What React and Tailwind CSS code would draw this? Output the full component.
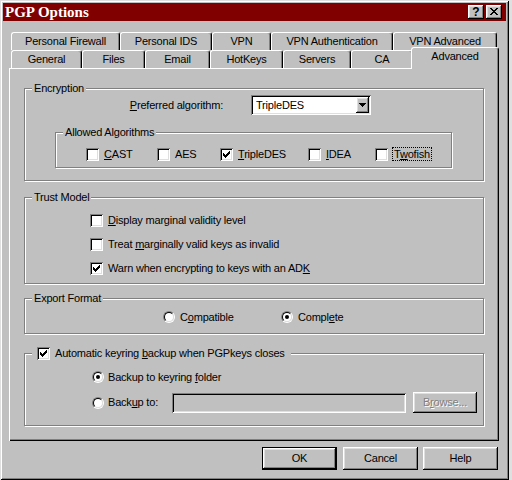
import React from "react";

const RAISED =
  "shadow-[inset_-1px_-1px_0_#000,inset_1px_1px_0_#fff,inset_-2px_-2px_0_#808080,inset_2px_2px_0_#dfdfdf]";
const SUNKEN =
  "shadow-[inset_1px_1px_0_#808080,inset_-1px_-1px_0_#fff,inset_2px_2px_0_#000,inset_-2px_-2px_0_#dfdfdf]";
const ETCH = "border border-[#808080] shadow-[inset_1px_1px_0_#fff,1px_1px_0_#fff]";

function U({ children }) {
  return <span className="underline underline-offset-[1px]">{children}</span>;
}

function CheckBox({ checked }) {
  return (
    <span className={`relative block w-[13px] h-[13px] shrink-0 bg-white ${SUNKEN}`}>
      {checked && (
        <svg
          className="absolute left-[3px] top-[3px]"
          width="7"
          height="7"
          viewBox="0 0 7 7"
          shapeRendering="crispEdges"
        >
          <rect x="0" y="2" width="1" height="3" fill="#000" />
          <rect x="1" y="3" width="1" height="3" fill="#000" />
          <rect x="2" y="4" width="1" height="3" fill="#000" />
          <rect x="3" y="3" width="1" height="3" fill="#000" />
          <rect x="4" y="2" width="1" height="3" fill="#000" />
          <rect x="5" y="1" width="1" height="3" fill="#000" />
          <rect x="6" y="0" width="1" height="3" fill="#000" />
        </svg>
      )}
    </span>
  );
}

function Radio({ checked }) {
  return (
    <span className="block w-[12px] h-[12px] shrink-0 rounded-full border border-t-[#808080] border-l-[#808080] border-r-white border-b-white">
      <span className="flex w-full h-full items-center justify-center rounded-full border border-t-black border-l-black border-r-[#dfdfdf] border-b-[#dfdfdf] bg-white">
        {checked && <span className="block w-[4px] h-[4px] rounded-full bg-black" />}
      </span>
    </span>
  );
}

function Legend({ children }) {
  return (
    <span className="absolute -top-[7px] left-[7px] px-[2px] h-[13px] flex items-center bg-[#c0c0c0]">
      {children}
    </span>
  );
}

function Tab({ label, w }) {
  return (
    <div
      className={`${w} h-[18px] shrink-0 flex items-center justify-center bg-[#c0c0c0] border-t border-l border-r border-t-white border-l-white border-r-black rounded-t-[3px] shadow-[inset_-1px_0_0_#808080]`}
    >
      {label}
    </div>
  );
}

function DlgButton({ children, def }) {
  if (def) {
    return (
      <div className="w-[75px] h-[23px] border border-black">
        <div className={`w-full h-full flex items-center justify-center bg-[#c0c0c0] ${RAISED}`}>
          {children}
        </div>
      </div>
    );
  }
  return (
    <div className={`w-[75px] h-[23px] flex items-center justify-center bg-[#c0c0c0] ${RAISED}`}>
      {children}
    </div>
  );
}

export default function App() {
  return (
    <div className="w-[512px] h-[480px] bg-[#e0e0e0] font-['Liberation_Sans',Arial,sans-serif] text-[11px] leading-[13px] tracking-[-0.2px] text-black">
      <div className="w-[509px] h-[480px] bg-[#c0c0c0] p-[3px] flex flex-col shadow-[inset_1px_1px_0_#dfdfdf,inset_-1px_-1px_0_#000,inset_2px_2px_0_#fff,inset_-2px_-2px_0_#808080]">
        {/* Title bar */}
        <div className="h-[18px] bg-[#800000] flex items-center pl-[2px] pr-[4px]">
          <span className="font-['Liberation_Serif','Times_New_Roman',serif] font-bold text-[15px] leading-[18px] tracking-normal text-white">
            PGP Options
          </span>
          <div className="ml-auto flex gap-[2px]">
            <div className={`w-[16px] h-[14px] bg-[#c0c0c0] flex items-center justify-center ${RAISED}`}>
              <span className="font-bold text-[12px] leading-[12px] tracking-normal -mt-[1px]">?</span>
            </div>
            <div className={`w-[16px] h-[14px] bg-[#c0c0c0] flex items-center justify-center ${RAISED}`}>
              <svg width="8" height="7" viewBox="0 0 8 7" shapeRendering="crispEdges" className="-mt-[1px]">
                <rect x="0" y="0" width="2" height="1" fill="#000" />
                <rect x="6" y="0" width="2" height="1" fill="#000" />
                <rect x="1" y="1" width="2" height="1" fill="#000" />
                <rect x="5" y="1" width="2" height="1" fill="#000" />
                <rect x="2" y="2" width="4" height="1" fill="#000" />
                <rect x="3" y="3" width="2" height="1" fill="#000" />
                <rect x="2" y="4" width="4" height="1" fill="#000" />
                <rect x="1" y="5" width="2" height="1" fill="#000" />
                <rect x="5" y="5" width="2" height="1" fill="#000" />
                <rect x="0" y="6" width="2" height="1" fill="#000" />
                <rect x="6" y="6" width="2" height="1" fill="#000" />
              </svg>
            </div>
          </div>
        </div>

        {/* Tabs */}
        <div className="mt-[11px] ml-[8px] flex">
          <Tab label="Personal Firewall" w="w-[109px]" />
          <Tab label="Personal IDS" w="w-[92px]" />
          <Tab label="VPN" w="w-[59px]" />
          <Tab label="VPN Authentication" w="w-[122px]" />
          <Tab label="VPN Advanced" w="w-[104px]" />
        </div>
        <div className="ml-[8px] flex items-end h-[18px]">
          <Tab label="General" w="w-[71px]" />
          <Tab label="Files" w="w-[63px]" />
          <Tab label="Email" w="w-[65px]" />
          <Tab label="HotKeys" w="w-[73px]" />
          <Tab label="Servers" w="w-[68px]" />
          <Tab label="CA" w="w-[62px]" />
          <div className="relative z-10 -ml-[2px] -mt-[3px] -mb-[1px] w-[88px] h-[22px] shrink-0 flex items-start justify-center pt-[2px] bg-[#c0c0c0] border-t border-l border-r border-t-white border-l-white border-r-black rounded-t-[3px] shadow-[inset_-1px_0_0_#808080]">
            Advanced
          </div>
        </div>

        {/* Panel */}
        <div className="ml-[6px] w-[490px] h-[373px] shrink-0 flex flex-col px-[15px] pt-[20px] shadow-[inset_1px_1px_0_#fff,inset_-1px_-1px_0_#000,inset_-2px_-2px_0_#808080]">
          {/* Encryption */}
          <div className={`relative h-[93px] shrink-0 ${ETCH}`}>
            <Legend>Encryption</Legend>
            <div className="flex items-center pt-[6px]">
              <span className="w-[198px] text-right">
                <U>P</U>referred algorithm:
              </span>
              <div className={`ml-[28px] w-[120px] h-[20px] bg-white flex items-center pl-[5px] pr-[2px] ${SUNKEN}`}>
                <span className="flex-1">TripleDES</span>
                <span className={`w-[13px] h-[16px] bg-[#c0c0c0] flex items-center justify-center ${RAISED}`}>
                  <svg width="7" height="4" viewBox="0 0 7 4" shapeRendering="crispEdges">
                    <rect x="0" y="0" width="7" height="1" fill="#000" />
                    <rect x="1" y="1" width="5" height="1" fill="#000" />
                    <rect x="2" y="2" width="3" height="1" fill="#000" />
                    <rect x="3" y="3" width="1" height="1" fill="#000" />
                  </svg>
                </span>
              </div>
            </div>
            <div className={`relative ml-[30px] mt-[17px] w-[397px] h-[36px] ${ETCH}`}>
              <Legend>Allowed Algorithms</Legend>
              <div className="flex items-center pl-[30px] pt-[14px]">
                <div className="w-[71px] flex items-center gap-[5px]">
                  <CheckBox />
                  <span>
                    <U>C</U>AST
                  </span>
                </div>
                <div className="w-[63px] flex items-center gap-[5px]">
                  <CheckBox />
                  <span>AES</span>
                </div>
                <div className="w-[88px] flex items-center gap-[5px]">
                  <CheckBox checked />
                  <span>
                    <U>T</U>ripleDES
                  </span>
                </div>
                <div className="w-[67px] flex items-center gap-[5px]">
                  <CheckBox />
                  <span>
                    <U>I</U>DEA
                  </span>
                </div>
                <div className="flex items-center gap-[4px]">
                  <CheckBox />
                  <span className="border border-dotted border-black px-[1px] leading-[12px]">
                    T<U>w</U>ofish
                  </span>
                </div>
              </div>
            </div>
          </div>

          {/* Trust Model */}
          <div className={`relative mt-[16px] h-[87px] shrink-0 ${ETCH}`}>
            <Legend>Trust Model</Legend>
            <div className="flex flex-col gap-[11px] pl-[65px] pt-[16px]">
              <div className="h-[13px] flex items-center gap-[5px]">
                <CheckBox />
                <span>
                  <U>D</U>isplay marginal validity level
                </span>
              </div>
              <div className="h-[13px] flex items-center gap-[5px]">
                <CheckBox />
                <span>
                  Treat <U>m</U>arginally valid keys as invalid
                </span>
              </div>
              <div className="h-[13px] flex items-center gap-[5px]">
                <CheckBox checked />
                <span>
                  Warn when encrypting to keys with an AD<U>K</U>
                </span>
              </div>
            </div>
          </div>

          {/* Export Format */}
          <div className={`relative mt-[14px] h-[36px] shrink-0 ${ETCH}`}>
            <Legend>Export Format</Legend>
            <div className="flex pl-[138px] pt-[12px]">
              <div className="w-[118px] h-[12px] flex items-center gap-[5px]">
                <Radio />
                <span>
                  C<U>o</U>mpatible
                </span>
              </div>
              <div className="h-[12px] flex items-center gap-[5px]">
                <Radio checked />
                <span>
                  Compl<U>e</U>te
                </span>
              </div>
            </div>
          </div>

          {/* Backup */}
          <div className={`relative mt-[19px] h-[73px] shrink-0 ${ETCH}`}>
            <span className="absolute -top-[7px] left-[7px] pl-[5px] pr-[6px] h-[13px] flex items-center gap-[5px] bg-[#c0c0c0]">
              <CheckBox checked />
              <span>
                Automatic keyring <U>b</U>ackup when PGPkeys closes
              </span>
            </span>
            <div className="flex flex-col pl-[67px] pt-[17px]">
              <div className="h-[12px] flex items-center gap-[4px]">
                <Radio checked />
                <span>
                  Backup to keyring <U>f</U>older
                </span>
              </div>
              <div className="mt-[9px] h-[21px] flex items-center">
                <div className="w-[80px] flex items-center gap-[4px]">
                  <Radio />
                  <span>
                    Back<U>u</U>p to:
                  </span>
                </div>
                <div className={`w-[234px] h-[20px] bg-[#c0c0c0] ${SUNKEN}`} />
                <div
                  className={`ml-[7px] w-[64px] h-[21px] flex items-center justify-center bg-[#c0c0c0] text-[#808080] [text-shadow:1px_1px_0_#fff] ${RAISED}`}
                >
                  <span>
                    B<U>r</U>owse...
                  </span>
                </div>
              </div>
            </div>
          </div>
        </div>

        {/* Buttons */}
        <div className="mt-[6px] flex justify-end pr-[8px]">
          <DlgButton def>OK</DlgButton>
          <div className="ml-[6px]">
            <DlgButton>Cancel</DlgButton>
          </div>
          <div className="ml-[5px]">
            <DlgButton>Help</DlgButton>
          </div>
        </div>
      </div>
    </div>
  );
}
